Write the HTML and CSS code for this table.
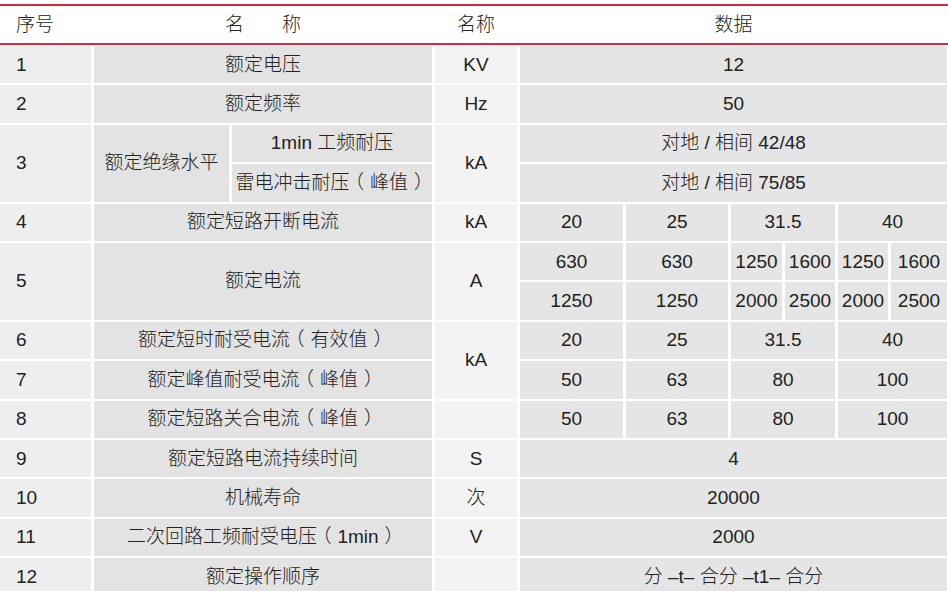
FILE: index.html
```html
<!DOCTYPE html>
<html lang="zh-CN">
<head>
<meta charset="utf-8">
<title>技术参数</title>
<link rel="stylesheet" href="styles.css">
</head>
<body>
<div class="spec">
  <div class="head">
    <div class="h no">序号</div>
    <div class="h c2">名　　称</div>
    <div class="h">名称</div>
    <div class="h c6">数据</div>
  </div>
  <div class="grid">
    <div class="cell no">1</div><div class="cell name c2">额定电压</div><div class="cell unit">KV</div><div class="cell data c6">12</div>
    <div class="cell no">2</div><div class="cell name c2">额定频率</div><div class="cell unit">Hz</div><div class="cell data c6">50</div>

    <div class="cell no r2">3</div><div class="cell name r2">额定绝缘水平</div><div class="cell name">1min 工频耐压</div><div class="cell unit r2">kA</div><div class="cell data c6">对地 / 相间 42/48</div>
    <div class="cell name">雷电冲击耐压<span class="pl">（</span>峰值<span class="pr">）</span></div><div class="cell data c6">对地 / 相间 75/85</div>

    <div class="cell no">4</div><div class="cell name c2">额定短路开断电流</div><div class="cell unit">kA</div><div class="cell data">20</div><div class="cell data">25</div><div class="cell data c2">31.5</div><div class="cell data c2">40</div>

    <div class="cell no r2">5</div><div class="cell name c2 r2">额定电流</div><div class="cell unit r2">A</div><div class="cell data">630</div><div class="cell data">630</div><div class="cell data">1250</div><div class="cell data">1600</div><div class="cell data">1250</div><div class="cell data">1600</div>
    <div class="cell data">1250</div><div class="cell data">1250</div><div class="cell data">2000</div><div class="cell data">2500</div><div class="cell data">2000</div><div class="cell data">2500</div>

    <div class="cell no">6</div><div class="cell name c2">额定短时耐受电流<span class="pl">（</span>有效值<span class="pr">）</span></div><div class="cell unit r2">kA</div><div class="cell data">20</div><div class="cell data">25</div><div class="cell data c2">31.5</div><div class="cell data c2">40</div>
    <div class="cell no">7</div><div class="cell name c2">额定峰值耐受电流<span class="pl">（</span>峰值<span class="pr">）</span></div><div class="cell data">50</div><div class="cell data">63</div><div class="cell data c2">80</div><div class="cell data c2">100</div>
    <div class="cell no">8</div><div class="cell name c2">额定短路关合电流<span class="pl">（</span>峰值<span class="pr">）</span></div><div class="cell unit"></div><div class="cell data">50</div><div class="cell data">63</div><div class="cell data c2">80</div><div class="cell data c2">100</div>

    <div class="cell no">9</div><div class="cell name c2">额定短路电流持续时间</div><div class="cell unit">S</div><div class="cell data c6">4</div>
    <div class="cell no">10</div><div class="cell name c2">机械寿命</div><div class="cell unit">次</div><div class="cell data c6">20000</div>
    <div class="cell no">11</div><div class="cell name c2">二次回路工频耐受电压<span class="pl">（</span>1min<span class="pr">）</span></div><div class="cell unit">V</div><div class="cell data c6">2000</div>
    <div class="cell no">12</div><div class="cell name c2">额定操作顺序</div><div class="cell unit"></div><div class="cell data c6">分 –t– 合分 –t1– 合分</div>
  </div>
</div>
</body>
</html>
```

FILE: styles.css
```css
html, body {
  margin: 0;
  padding: 0;
  background: #ffffff;
  overflow: hidden;
}

body {
  font-family: "Liberation Sans", "Noto Sans CJK SC", sans-serif;
  font-size: 19px;
  font-weight: 300;
  line-height: 20px;
  color: #222222;
}

.spec {
  width: 948px;
  padding-top: 4px;
}

.head,
.grid {
  display: grid;
  grid-template-columns: 91px 135px 200px 82px 103px 102px 51px 50px 50px 56px;
  column-gap: 3px;
  width: 947px;
}

.head {
  width: 948px;
  height: 37px;
  border-top: 2px solid #d42a3f;
  border-bottom: 2px solid #d42a3f;
  margin-bottom: 1px;
}

.h {
  display: flex;
  align-items: center;
  justify-content: center;
}

.h.no {
  justify-content: flex-start;
  padding-left: 16px;
}

.grid {
  grid-template-rows: repeat(14, 37.4px);
  row-gap: 2px;
}

.cell {
  display: flex;
  align-items: center;
  justify-content: center;
  white-space: nowrap;
}

.c2 { grid-column: span 2; }
.c6 { grid-column: span 6; }
.r2 { grid-row: span 2; }

.pl,
.pr {
  font-feature-settings: "halt";
}

.pl {
  padding: 0 6px 0 5px;
}

.pr {
  padding: 0 5px 0 6px;
}

.cell.no {
  background: #eeeeee;
  justify-content: flex-start;
  padding-left: 16px;
}

.cell.name {
  background: #e3e3e3;
}

.cell.unit {
  background: #f3f3f3;
}

.cell.data {
  background: #e5e5e5;
}
```
